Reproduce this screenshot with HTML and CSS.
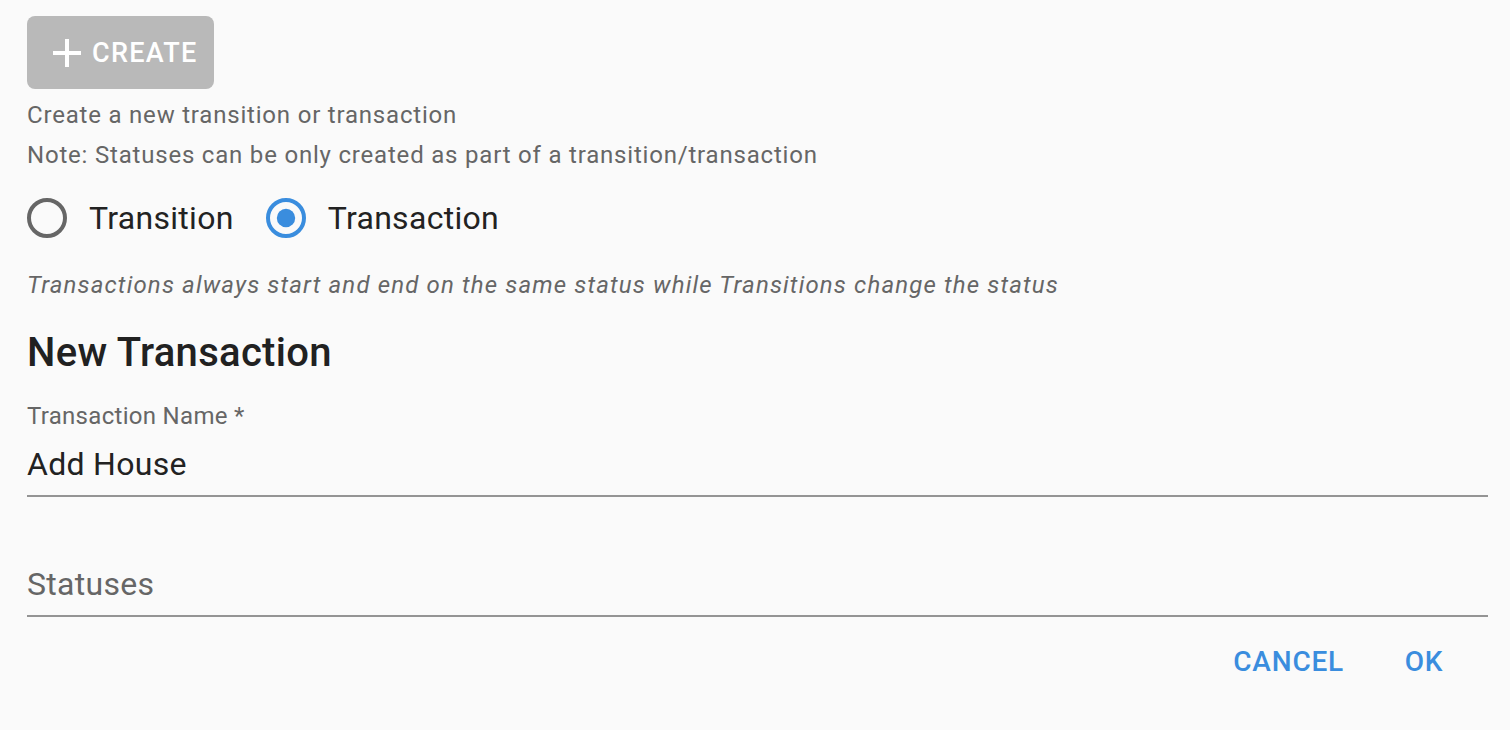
FILE: index.html
```html
<!DOCTYPE html>
<html lang="en">
<head>
<meta charset="utf-8">
<title>New Transaction</title>
<link rel="stylesheet" href="styles.css">
</head>
<body>
<div class="page">
  <button class="create-btn" type="button">
    <svg class="plus" viewBox="5 5 14 14" width="28" height="28" aria-hidden="true"><path d="M19 13h-6v6h-2v-6H5v-2h6V5h2v6h6v2z" fill="#fff"/></svg>
    <span>CREATE</span>
  </button>
  <p class="caption first">Create a new transition or transaction</p>
  <p class="caption">Note: Statuses can be only created as part of a transition/transaction</p>

  <div class="radio-group">
    <label class="radio-label">
      <span class="radio">
        <svg viewBox="0 0 24 24" width="48" height="48" aria-hidden="true"><circle cx="12" cy="12" r="9" fill="none" stroke="#666" stroke-width="2"/></svg>
      </span>
      <span class="radio-text">Transition</span>
    </label>
    <label class="radio-label">
      <span class="radio">
        <svg viewBox="0 0 24 24" width="48" height="48" aria-hidden="true"><circle cx="12" cy="12" r="9" fill="none" stroke="#3a8dde" stroke-width="2"/><circle cx="12" cy="12" r="4.6" fill="#3a8dde"/></svg>
      </span>
      <span class="radio-text">Transaction</span>
    </label>
  </div>

  <p class="hint">Transactions always start and end on the same status while Transitions change the status</p>

  <h2 class="title">New Transaction</h2>

  <div class="field">
    <div class="field-label">Transaction Name *</div>
    <div class="field-input">Add House</div>
  </div>

  <div class="field second">
    <div class="field-input placeholder">Statuses</div>
  </div>

  <div class="actions">
    <button class="text-btn" type="button">CANCEL</button>
    <button class="text-btn ok" type="button">OK</button>
  </div>
</div>
</body>
</html>
```

FILE: styles.css
```css
* { box-sizing: border-box; }

html, body {
  margin: 0;
  padding: 0;
  background: #fafafa;
}

body {
  font-family: Roboto, "Liberation Sans", Arial, sans-serif;
  color: rgba(0, 0, 0, 0.87);
}

.page {
  padding: 16px 22px 0 27px;
}

.create-btn {
  display: flex;
  align-items: center;
  gap: 11px;
  width: 187px;
  height: 73px;
  padding: 0 0 0 26px;
  border: 0;
  border-radius: 8px;
  background: #b9b9b9;
  color: #fff;
  font-family: inherit;
  font-size: 27px;
  font-weight: 500;
  letter-spacing: 1.3px;
}

.plus { display: block; flex: none; }

.caption {
  margin: 0;
  font-size: 24px;
  line-height: 40px;
  letter-spacing: 0.8px;
  color: #666;
}

.caption.first { margin-top: 6px; }

.radio-group {
  display: flex;
  margin: 1px 0 0 -22px;
}

.radio-label {
  display: flex;
  align-items: center;
  margin-right: 10px;
}

.radio {
  display: block;
  padding: 18px;
}

.radio svg { display: block; }

.radio-text {
  font-size: 32px;
  letter-spacing: 0.3px;
  color: #222;
}

.hint {
  margin: 5px 0 0;
  font-size: 24px;
  line-height: 40px;
  font-style: italic;
  letter-spacing: 1.15px;
  color: #666;
}

.title {
  margin: 16px 0 0;
  font-size: 40px;
  line-height: 64px;
  font-weight: 500;
  letter-spacing: 0.3px;
  color: #212121;
}

.field { margin-top: 15px; }

.field.second {
  margin-top: 24px;
  padding-top: 32px;
}

.field-label {
  font-size: 24px;
  line-height: 32px;
  margin-bottom: 1px;
  letter-spacing: 0.3px;
  color: #666;
}

.field-input {
  padding: 8px 0 8px;
  font-size: 32px;
  line-height: 46px;
  letter-spacing: 0.3px;
  color: #222;
  border-bottom: 2px solid #949494;
}

.field-input.placeholder { color: #666; }

.actions {
  display: flex;
  justify-content: flex-end;
  margin-top: 8px;
}

.text-btn {
  min-width: 128px;
  padding: 12px 16px;
  border: 0;
  background: transparent;
  color: #3a8dde;
  font-family: inherit;
  font-size: 28px;
  font-weight: 500;
  line-height: 49px;
  letter-spacing: 0.8px;
}
```
